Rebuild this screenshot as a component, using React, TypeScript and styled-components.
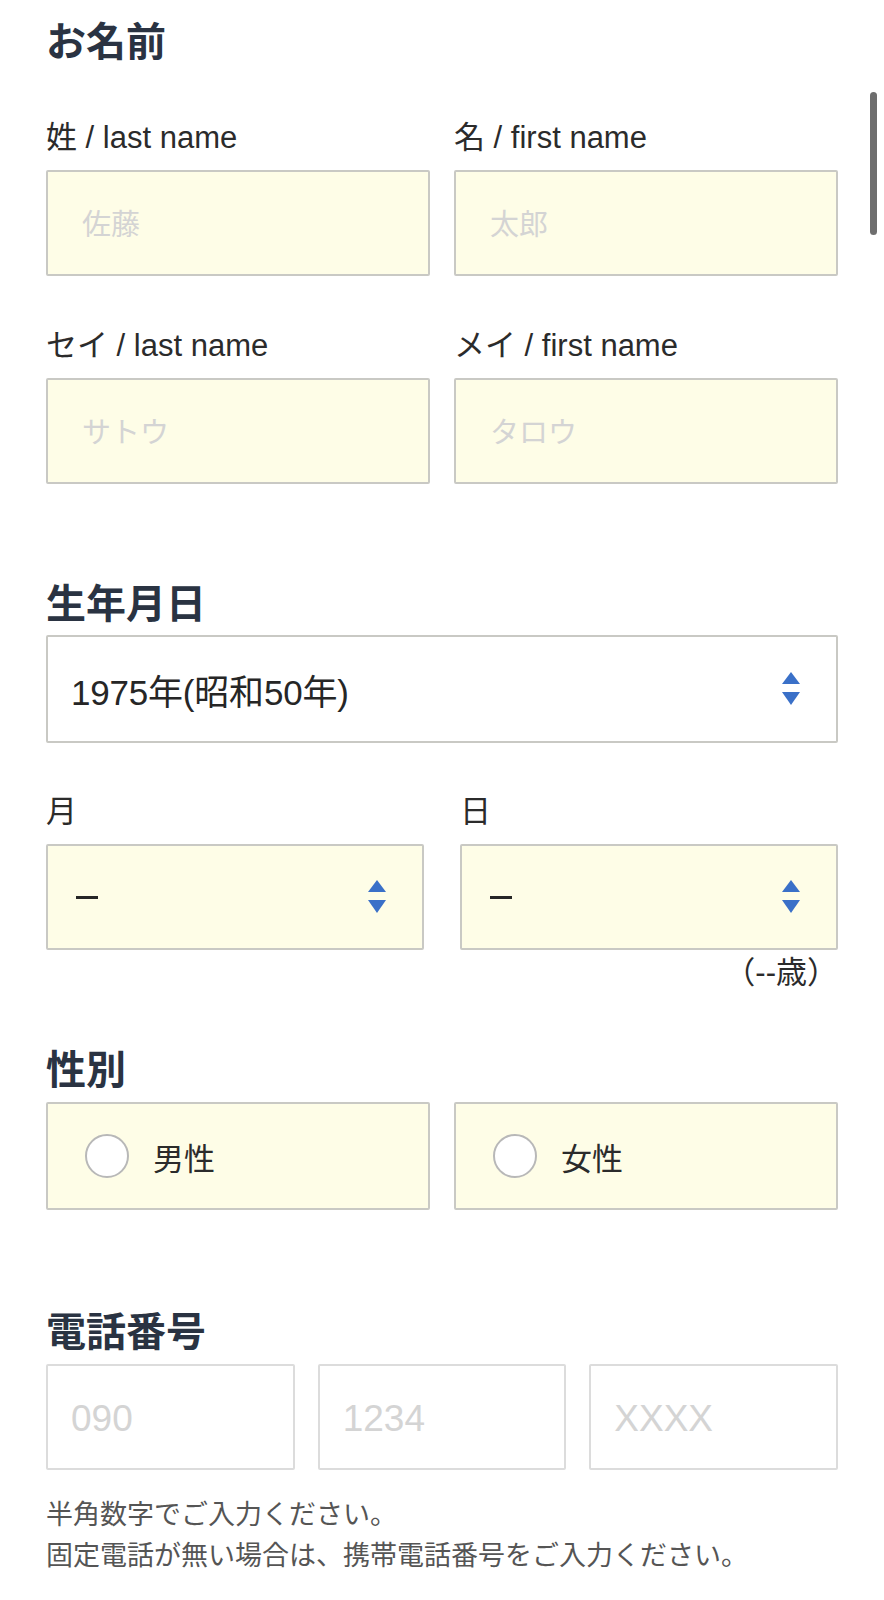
import React from "react";
import styled, { createGlobalStyle } from "styled-components";

const GlobalStyle = createGlobalStyle`
  html, body { margin: 0; padding: 0; background: #ffffff; }
  body { font-family: "Liberation Sans", "Noto Sans CJK JP", sans-serif; color: #2b2b2b; }
  * { box-sizing: border-box; }
`;

const Page = styled.main`
  padding: 16px 46px 40px;
  display: flex;
  flex-direction: column;
`;

const Section = styled.section<{ $top: number }>`
  margin-top: ${(p) => p.$top}px;
  display: flex;
  flex-direction: column;
`;

const Heading = styled.h2`
  margin: 0;
  font-size: 40px;
  line-height: 53px;
  font-weight: 700;
  color: #2a3342;
`;

const Grid = styled.div<{ $cols: number; $gap: number; $rowGap?: number; $top?: number }>`
  display: grid;
  grid-template-columns: repeat(${(p) => p.$cols}, 1fr);
  column-gap: ${(p) => p.$gap}px;
  row-gap: ${(p) => p.$rowGap ?? 0}px;
  margin-top: ${(p) => p.$top ?? 0}px;
`;

const Field = styled.div`
  display: flex;
  flex-direction: column;
  gap: 12px;
`;

const Label = styled.label`
  font-size: 31px;
  line-height: 40px;
  color: #2b2b2b;
`;

const TextInput = styled.input<{ $tinted?: boolean; $size?: number; $pad?: number; $h?: number }>`
  width: 100%;
  height: ${(p) => p.$h ?? 106}px;
  border: 2px solid ${(p) => (p.$tinted ? "#c9c9c4" : "#dcdcdc")};
  border-radius: 2px;
  background: ${(p) => (p.$tinted ? "#fefde7" : "#ffffff")};
  padding: 4px 0 0 ${(p) => p.$pad ?? 34}px;
  font-family: inherit;
  font-size: ${(p) => p.$size ?? 29}px;
  color: #2b2b2b;
  outline: none;
  &::placeholder { color: #d4d4d4; }
`;

const SelectBox = styled.div<{ $tinted?: boolean; $h: number }>`
  height: ${(p) => p.$h}px;
  border: 2px solid #c9c9c4;
  border-radius: 2px;
  background: ${(p) => (p.$tinted ? "#fefde7" : "#ffffff")};
  display: flex;
  align-items: center;
  justify-content: space-between;
  padding: 0 36px 0 23px;
`;

const SelectValue = styled.span`
  font-size: 35px;
  color: #262626;
  letter-spacing: -0.2px;
`;

const Dash = styled.span`
  display: block;
  width: 22px;
  height: 3px;
  background: #262626;
  margin-left: 5px;
`;

const Arrows = () => (
  <svg width="18" height="34" viewBox="0 0 18 34" aria-hidden="true">
    <path d="M9 0 L18 12 L0 12 Z" fill="#3a70c8" />
    <path d="M0 20 L18 20 L9 33 Z" fill="#3a70c8" />
  </svg>
);

const Age = styled.div`
  margin-top: 3px;
  text-align: right;
  font-size: 31px;
  line-height: 40px;
  color: #2b2b2b;
`;

const RadioCard = styled.label`
  height: 108px;
  border: 2px solid #c9c9c4;
  border-radius: 2px;
  background: #fefde7;
  display: flex;
  align-items: center;
  gap: 24px;
  padding-left: 37px;
  font-size: 31px;
  color: #2b2b2b;
`;

const RadioCircle = styled.span`
  width: 44px;
  height: 44px;
  border-radius: 50%;
  border: 2px solid #b8b8b8;
  background: #ffffff;
  flex: none;
`;

const Help = styled.p`
  margin: 25px 0 0;
  font-size: 27px;
  line-height: 41px;
  color: #555555;
`;

const ScrollIndicator = styled.div`
  position: fixed;
  top: 92px;
  right: 7px;
  width: 7px;
  height: 143px;
  border-radius: 4px;
  background: #6e6e6e;
`;

export default function App() {
  return (
    <>
      <GlobalStyle />
      <Page>
        <Section $top={0}>
          <Heading>お名前</Heading>
          <Grid $cols={2} $gap={24} $rowGap={50} $top={49}>
            <Field>
              <Label>姓 / last name</Label>
              <TextInput $tinted placeholder="佐藤" />
            </Field>
            <Field>
              <Label>名 / first name</Label>
              <TextInput $tinted placeholder="太郎" />
            </Field>
            <Field>
              <Label>セイ / last name</Label>
              <TextInput $tinted placeholder="サトウ" />
            </Field>
            <Field>
              <Label>メイ / first name</Label>
              <TextInput $tinted placeholder="タロウ" />
            </Field>
          </Grid>
        </Section>

        <Section $top={94}>
          <Heading>生年月日</Heading>
          <Grid $cols={1} $gap={0} $top={4}>
            <SelectBox $h={108}>
              <SelectValue>1975年(昭和50年)</SelectValue>
              <Arrows />
            </SelectBox>
          </Grid>
          <Grid $cols={2} $gap={36} $top={49}>
            <Field>
              <Label>月</Label>
              <SelectBox $tinted $h={106}>
                <Dash />
                <Arrows />
              </SelectBox>
            </Field>
            <Field>
              <Label>日</Label>
              <SelectBox $tinted $h={106}>
                <Dash />
                <Arrows />
              </SelectBox>
            </Field>
          </Grid>
          <Age>（--歳）</Age>
        </Section>

        <Section $top={51}>
          <Heading>性別</Heading>
          <Grid $cols={2} $gap={24} $top={5}>
            <RadioCard>
              <RadioCircle />
              男性
            </RadioCard>
            <RadioCard>
              <RadioCircle />
              女性
            </RadioCard>
          </Grid>
        </Section>

        <Section $top={96}>
          <Heading>電話番号</Heading>
          <Grid $cols={3} $gap={23} $top={5}>
            <TextInput placeholder="090" $size={37} $pad={23} />
            <TextInput placeholder="1234" $size={37} $pad={23} />
            <TextInput placeholder="XXXX" $size={37} $pad={23} />
          </Grid>
          <Help>
            半角数字でご入力ください。
            <br />
            固定電話が無い場合は、携帯電話番号をご入力ください。
          </Help>
        </Section>
      </Page>
      <ScrollIndicator />
    </>
  );
}
